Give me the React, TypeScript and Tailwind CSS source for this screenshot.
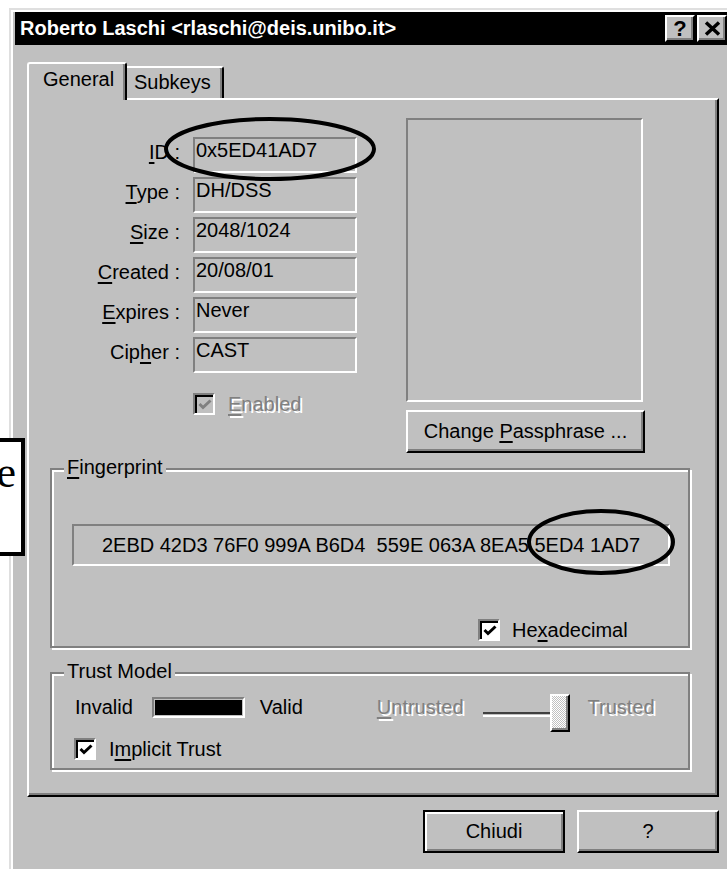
import React from "react";

// Win95-style property sheet for a PGP key

const raised =
  "bg-[#c0c0c0] border-2 border-t-white border-l-white border-r-black border-b-black shadow-[inset_-2px_-2px_0_#808080]";
const staticEdge =
  "border-2 border-t-[#808080] border-l-[#808080] border-r-white border-b-white";
const disabledText = "text-[#808080] [text-shadow:2px_2px_0_#fff]";

function Key({ children }: { children: React.ReactNode }) {
  return <span className="underline decoration-2 underline-offset-[3px]">{children}</span>;
}

function Check({ disabled = false }: { disabled?: boolean }) {
  return (
    <div
      className={`w-[22px] h-[22px] shrink-0 flex items-center justify-center border-2 border-t-[#808080] border-l-[#808080] border-r-white border-b-white shadow-[inset_2px_2px_0_#000] ${
        disabled ? "bg-[#c0c0c0]" : "bg-white"
      }`}
    >
      <svg width="14" height="12" viewBox="0 0 14 12" className="ml-[2px] mt-[2px]">
        <path d="M1.5 5 L5 8.5 L12.5 1.5" fill="none" stroke={disabled ? "#808080" : "#000"} strokeWidth="3" />
      </svg>
    </div>
  );
}

function Group({ title, className, children }: { title: React.ReactNode; className: string; children: React.ReactNode }) {
  return (
    <div className={`relative border-2 border-[#808080] shadow-[2px_2px_0_#fff,inset_2px_2px_0_#fff] ${className}`}>
      <span className="absolute left-[12px] -top-[14px] px-[3px] bg-[#c0c0c0]">{title}</span>
      {children}
    </div>
  );
}

const keyRows = [
  { label: <><Key>I</Key>D :</>, value: "0x5ED41AD7" },
  { label: <><Key>T</Key>ype :</>, value: "DH/DSS" },
  { label: <><Key>S</Key>ize :</>, value: "2048/1024" },
  { label: <><Key>C</Key>reated :</>, value: "20/08/01" },
  { label: <><Key>E</Key>xpires :</>, value: "Never" },
  { label: <>Cip<Key>h</Key>er :</>, value: "CAST" },
];

function TitleBar() {
  return (
    <div className="w-[716px] h-[33px] bg-black flex items-center">
      <span className="pl-[5px] text-white font-bold">Roberto Laschi &lt;rlaschi@deis.unibo.it&gt;</span>
      <div className="ml-auto flex gap-[2px] pr-[4px]">
        <div className={`${raised} w-[30px] h-[27px] flex items-center justify-center font-bold text-[22px] leading-none`}>?</div>
        <div className={`${raised} w-[30px] h-[27px] flex items-center justify-center`}>
          <svg width="17" height="15" viewBox="0 0 17 15">
            <path d="M2 1.5 L15 13.5 M15 1.5 L2 13.5" stroke="#000" strokeWidth="3.5" />
          </svg>
        </div>
      </div>
    </div>
  );
}

function Tabs() {
  return (
    <div className="flex items-end h-[36px]">
      <div className="relative z-10 -mb-[2px] h-[38px] w-[100px] bg-[#c0c0c0] border-l-2 border-t-2 border-r-2 border-l-white border-t-white border-r-black rounded-t-[3px] shadow-[inset_-2px_0_0_#808080] pl-[14px] pt-[4px]">
        General
      </div>
      <div className="-ml-[2px] h-[32px] w-[99px] border-t-2 border-r-2 border-t-white border-r-black rounded-tr-[3px] shadow-[inset_-2px_0_0_#808080] pl-[9px] pt-[3px]">
        Subkeys
      </div>
    </div>
  );
}

function GeneralPage() {
  return (
    <div className="w-[692px] h-[699px] border-2 border-t-white border-l-white border-r-black border-b-black shadow-[inset_-2px_-2px_0_#808080] pt-[18px]">
      <div className="flex">
        <div className="mt-[19px] flex flex-col">
          <div className="flex flex-col gap-[4px]">
            {keyRows.map((row) => (
              <div key={row.value} className="flex items-start h-[36px]">
                <div className="w-[151px] pt-[4px] text-right">{row.label}</div>
                <div className={`${staticEdge} ml-[13px] w-[164px] h-[36px] pl-[1px]`}>{row.value}</div>
              </div>
            ))}
          </div>
          <div className="flex items-start mt-[20px] ml-[164px]">
            <Check disabled />
            <span className={`ml-[13px] ${disabledText}`}>
              <Key>E</Key>nabled
            </span>
          </div>
        </div>
        <div className="ml-[49px] flex flex-col">
          <div className={`${staticEdge} w-[237px] h-[284px]`} />
          <div className={`${raised} mt-[8px] w-[239px] h-[43px] flex items-center justify-center`}>
            Change&nbsp;<Key>P</Key>assphrase ...
          </div>
        </div>
      </div>

      <Group title={<><Key>F</Key>ingerprint</>} className="mt-[15px] ml-[21px] w-[640px] h-[180px]">
        <div className={`${staticEdge} mt-[54px] ml-[20px] w-[598px] h-[42px] flex items-center justify-center whitespace-pre`}>
          2EBD 42D3 76F0 999A B6D4  559E 063A 8EA5 5ED4 1AD7
        </div>
        <div className="flex items-start mt-[53px] ml-[426px]">
          <Check />
          <span className="ml-[12px]">
            He<Key>x</Key>adecimal
          </span>
        </div>
      </Group>

      <Group title="Trust Model" className="mt-[24px] ml-[21px] w-[640px] h-[98px]">
        <div className="flex items-start mt-[20px] h-[38px]">
          <span className="ml-[23px] mt-[2px]">Invalid</span>
          <div className={`${staticEdge} ml-[19px] mt-[3px] w-[93px] h-[21px] p-[1px]`}>
            <div className="w-full h-full bg-black" />
          </div>
          <span className="ml-[15px] mt-[2px]">Valid</span>
          <span className={`ml-[74px] mt-[2px] ${disabledText}`}>
            <Key>U</Key>ntrusted
          </span>
          <div className="ml-[19px] mt-[18px] w-[67px] h-[5px] border-t-2 border-t-[#404040] border-b-2 border-b-white" />
          <div className="w-[20px] h-[38px] border-2 border-t-white border-l-white border-r-black border-b-black shadow-[inset_-2px_-2px_0_#808080] bg-[repeating-conic-gradient(#fff_0%_25%,#c0c0c0_0%_50%)] bg-[length:2px_2px]" />
          <span className={`ml-[18px] mt-[2px] ${disabledText}`}>Trusted</span>
        </div>
        <div className="flex items-start mt-[6px] ml-[22px]">
          <Check />
          <span className="ml-[13px]">
            I<Key>m</Key>plicit Trust
          </span>
        </div>
      </Group>
    </div>
  );
}

export default function App() {
  return (
    <div className="relative w-[727px] h-[869px] overflow-hidden bg-white font-['Liberation_Sans',Arial,sans-serif] text-[20px] leading-[23px] text-black">
      <div className="ml-[9px] mt-[8px] w-[760px] h-[900px] bg-[#c0c0c0] border-l-2 border-t-2 border-[#dfdfdf] shadow-[inset_2px_2px_0_#fff] pl-[4px] pt-[2px]">
        <TitleBar />
        <div className="pl-[12px] pt-[17px]">
          <Tabs />
          <GeneralPage />
          <div className="w-[692px] mt-[13px] flex justify-end gap-[12px]">
            <div className="w-[142px] h-[43px] border-2 border-black bg-[#c0c0c0] shadow-[inset_2px_2px_0_#fff,inset_-2px_-2px_0_#808080] flex items-center justify-center">
              Chiudi
            </div>
            <div className={`${raised} w-[142px] h-[43px] flex items-center justify-center`}>?</div>
          </div>
        </div>
      </div>

      {/* callout box at the left margin */}
      <div className="absolute -left-[8px] top-[438px] w-[33px] h-[118px] border-4 border-black bg-white overflow-hidden flex justify-end pr-[5px] pt-[8px]">
        <span className="font-['Liberation_Serif',serif] text-[44px] leading-[46px]">e</span>
      </div>

      {/* hand-drawn ellipses marking the key id */}
      <svg className="absolute inset-0 pointer-events-none" width="727" height="869">
        <ellipse cx="270" cy="149" rx="104" ry="30" fill="none" stroke="#000" strokeWidth="4" />
        <ellipse cx="601" cy="542" rx="72" ry="31" fill="none" stroke="#000" strokeWidth="4" />
      </svg>
    </div>
  );
}
